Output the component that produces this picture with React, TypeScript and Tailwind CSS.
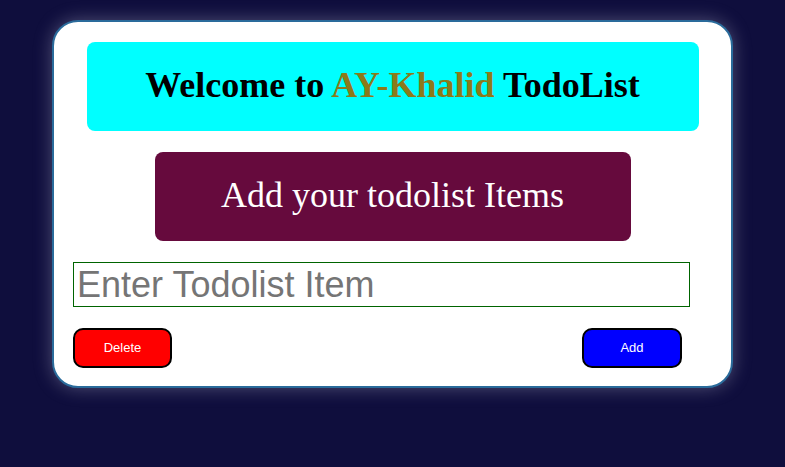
export default function App() {
  return (
    <div className="min-h-screen bg-[#0f0e3d] pt-[20px]" style={{ minHeight: 467 }}>
      {/* card */}
      <div className="mx-auto w-[681px] h-[368px] rounded-[26px] border-2 border-[#2a6b9b] bg-white px-[19px] pt-[20px] shadow-[0_0_18px_rgba(200,200,220,0.35)] flex flex-col">
        <div className="self-center w-[612px] h-[89px] rounded-[8px] bg-[#00ffff] flex items-center justify-center pb-[4px]">
          <h1 className="text-[36px] font-bold text-black font-['Liberation_Serif',serif]">
            Welcome to <span className="text-[#8b7a1a]">AY-Khalid</span> TodoList
          </h1>
        </div>

        <div className="self-center mt-[21px] w-[476px] h-[89px] rounded-[8px] bg-[#660a3d] flex items-center justify-center pb-[4px]">
          <h2 className="text-[36px] text-white font-['Liberation_Serif',serif]">Add your todolist Items</h2>
        </div>

        <input
          type="text"
          placeholder="Enter Todolist Item"
          className="mt-[21px] w-[617px] h-[45px] border border-[#006400] px-[3px] text-[36px] font-['Liberation_Sans',Arial,sans-serif] placeholder:text-[#757575] outline-none"
        />

        <div className="mt-[21px] w-[609px] flex justify-between">
          <button className="w-[99px] h-[40px] rounded-[10px] border-2 border-black bg-[#ff0000] text-white text-[13px] font-['Liberation_Sans',Arial,sans-serif]">
            Delete
          </button>
          <button className="w-[100px] h-[40px] rounded-[10px] border-2 border-black bg-[#0000ff] text-white text-[13px] font-['Liberation_Sans',Arial,sans-serif]">
            Add
          </button>
        </div>
      </div>
    </div>
  );
}
